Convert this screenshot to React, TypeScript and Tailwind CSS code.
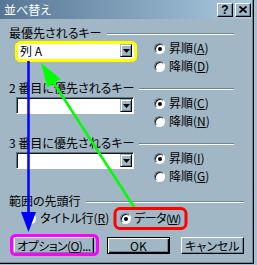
import type { ReactNode } from 'react'

function Accel({ children }: { children: ReactNode }) {
  return <span className="underline decoration-1 underline-offset-[1px]">{children}</span>
}

function Radio({ checked = false }: { checked?: boolean }) {
  return (
    <span className="flex h-[11px] w-[11px] shrink-0 items-center justify-center rounded-full border border-t-[#5c7688] border-l-[#5c7688] border-r-white border-b-white bg-white shadow-[inset_1px_1px_0_#1a1a1a]">
      {checked && <span className="ml-[1px] mt-[1px] h-[4px] w-[4px] rounded-full bg-black" />}
    </span>
  )
}

function RadioItem({ checked, label, accel, tight = false }: { checked?: boolean; label: string; accel: string; tight?: boolean }) {
  return (
    <div className={`flex h-[18px] items-center whitespace-nowrap ${tight ? 'gap-[3px]' : 'gap-[4px]'}`}>
      <Radio checked={checked} />
      <span className={tight ? 'tracking-[-0.5px]' : ''}>
        {label}
        <span className={tight ? 'text-[11px] tracking-[-1px]' : ''}>
          (<Accel>{accel}</Accel>)
        </span>
      </span>
    </div>
  )
}

function GroupLabel({ text, className = '' }: { text: string; className?: string }) {
  return (
    <div className={`flex h-[12px] items-center ${className}`}>
      <span className="whitespace-nowrap">{text}</span>
      <div className="ml-[5px] mt-[1px] h-[2px] flex-1 border-t border-b border-t-[#6b8799] border-b-white" />
    </div>
  )
}

function Combo({ value = '' }: { value?: string }) {
  return (
    <div className="flex h-[17px] w-[118px] border border-t-[#5c7688] border-l-[#5c7688] border-r-white border-b-white bg-white shadow-[inset_1px_1px_0_#1a1a1a]">
      <div className="flex flex-1 items-center pl-[3px] pt-[1px]">{value}</div>
      <div className="m-[1px] flex w-[12px] items-center justify-center border border-t-[#a1b7c5] border-l-[#a1b7c5] border-r-black border-b-black bg-[#a1b7c5] shadow-[inset_1px_1px_0_#ffffff,inset_-1px_-1px_0_#6b8799]">
        <svg width="7" height="4" viewBox="0 0 7 4">
          <path d="M0 0h7L3.5 4z" fill="#000" />
        </svg>
      </div>
    </div>
  )
}

function KeyGroup({
  title,
  value,
  up,
  down,
  className = '',
}: {
  title: string
  value?: string
  up: string
  down: string
  className?: string
}) {
  return (
    <>
      <GroupLabel text={title} className={`mr-[10px] ${className}`} />
      <div className="flex h-[36px]">
        <div className="ml-[7px] mt-[3px]">
          <Combo value={value} />
        </div>
        <div className="ml-[20px] flex flex-col">
          <RadioItem checked label="昇順" accel={up} />
          <RadioItem label="降順" accel={down} />
        </div>
      </div>
    </>
  )
}

function Button({ children, width, isDefault = false, className = '' }: { children: ReactNode; width: string; isDefault?: boolean; className?: string }) {
  const frame = isDefault
    ? 'border border-black shadow-[inset_1px_1px_0_#ffffff,inset_-1px_-1px_0_#000000,inset_-2px_-2px_0_#6b8799]'
    : 'border border-t-white border-l-white border-r-black border-b-black shadow-[inset_-1px_-1px_0_#6b8799]'
  return (
    <div className={`flex h-[17px] items-center justify-center whitespace-nowrap bg-[#a1b7c5] pt-[1px] ${frame} ${width} ${className}`}>
      {children}
    </div>
  )
}

function TitleButton({ children }: { children: ReactNode }) {
  return (
    <div className="flex h-[14px] w-[16px] items-center justify-center border border-t-white border-l-white border-r-black border-b-black bg-[#a1b7c5] shadow-[inset_-1px_-1px_0_#6b8799]">
      {children}
    </div>
  )
}

export default function App() {
  return (
    <div className="relative h-[265px] w-[257px] overflow-hidden bg-[#a8bfcd] font-['Noto_Sans_CJK_JP',sans-serif] text-[12px] leading-[12px] text-black [font-feature-settings:'palt']">
      <div className="flex h-[264px] w-[254px] flex-col border-r border-b border-black bg-[#a1b7c5] shadow-[inset_-1px_-1px_0_#6b8799]">
        <div className="flex h-[19px] w-[252px] items-center bg-gradient-to-r from-[#567694] to-[#aacae0] pl-[4px] pr-[1px]">
          <span className="flex-1 text-white">並べ替え</span>
          <TitleButton>
            <span className="font-['Liberation_Sans',sans-serif] text-[12px] font-bold leading-[12px]">?</span>
          </TitleButton>
          <div className="ml-[2px]">
            <TitleButton>
              <svg width="8" height="7" viewBox="0 0 8 7">
                <path d="M0.5 0.5L7.5 6.5M7.5 0.5L0.5 6.5" stroke="#000" strokeWidth="1.8" />
              </svg>
            </TitleButton>
          </div>
        </div>

        <div className="flex flex-col px-[9px]">
          <KeyGroup title="最優先されるキー" value="列 A" up="A" down="D" className="mt-[8px]" />
          <KeyGroup title="2 番目に優先されるキー" up="C" down="N" className="mt-[7px]" />
          <KeyGroup title="3 番目に優先されるキー" up="I" down="G" className="mt-[7px]" />

          <GroupLabel text="範囲の先頭行" className="mt-[10px]" />
          <div className="mt-[2px] flex">
            <div className="ml-[16px] w-[95px]">
              <RadioItem label="タイトル行" accel="R" />
            </div>
            <RadioItem checked label="データ" accel="W" tight />
          </div>

          <div className="mt-[10px] ml-[5px] flex">
            <Button width="w-[81px]">
              <span className="tracking-[-0.6px]">
                オプション(<Accel>O</Accel>)...
              </span>
            </Button>
            <Button width="w-[64px]" isDefault className="ml-[13px]">
              OK
            </Button>
            <Button width="w-[64px]" className="ml-[11px]">
              キャンセル
            </Button>
          </div>
        </div>
      </div>

      {/* annotation marks drawn over the dialog */}
      <svg className="pointer-events-none absolute left-0 top-0" width="257" height="265" viewBox="0 0 257 265">
        <rect x="16.5" y="42.5" width="119" height="18" rx="4" fill="none" stroke="#ffff00" strokeWidth="3" />
        <line x1="28.5" y1="61" x2="28.5" y2="214" stroke="#0000ff" strokeWidth="2.5" />
        <polygon points="21,212 36,212 28.5,232" fill="#0000ff" />
        <line x1="50" y1="77" x2="134" y2="207" stroke="#00ff00" strokeWidth="2.5" />
        <polygon points="41,63 60.7,78.9 47.3,87.5" fill="#00ff00" />
        <rect x="115" y="208.5" width="71" height="20" rx="5" fill="none" stroke="#ff0000" strokeWidth="3" />
        <rect x="11.5" y="235.5" width="86" height="19" rx="4" fill="none" stroke="#ff00ff" strokeWidth="3" />
      </svg>
    </div>
  )
}
